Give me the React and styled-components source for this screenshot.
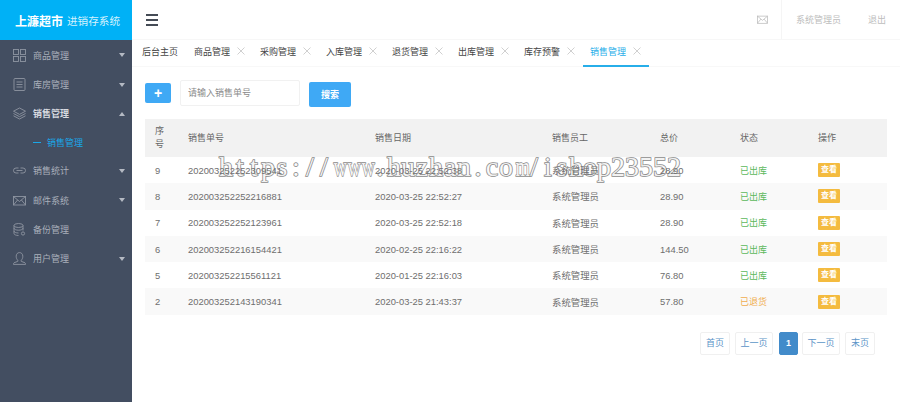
import React from 'react';
import styled, { createGlobalStyle } from 'styled-components';

const GlobalStyle = createGlobalStyle`
  html, body { margin: 0; padding: 0; background: #fff; }
  body { font-family: "Liberation Sans", "Noto Sans CJK SC", sans-serif; font-size: 9px; color: #666; }
  * { box-sizing: border-box; }
`;

const Page = styled.div`
  position: relative;
  display: flex;
  width: 900px;
  height: 402px;
  overflow: hidden;
`;

const Sidebar = styled.aside`
  flex: 0 0 132px;
  background: #434e61;
  color: #aab0bb;
`;

const Logo = styled.div`
  display: flex;
  align-items: center;
  justify-content: center;
  gap: 4px;
  height: 40px;
  padding-left: 3px;
  background: #00b1f6;
  color: #fff;
`;

const LogoName = styled.strong`
  font-size: 12px;
  font-weight: 700;
`;

const LogoSub = styled.span`
  font-size: 10.6px;
  color: #d5f1fd;
`;

const Menu = styled.nav`
  display: flex;
  flex-direction: column;
  padding-top: 0.5px;
`;

const MenuItem = styled.div`
  display: flex;
  align-items: center;
  height: 29.4px;
  padding: 0 7px 0 13px;
  color: ${p => (p.$open ? '#d8dbe0' : '#aab0bb')};
  font-weight: ${p => (p.$open ? 700 : 400)};
`;

const MenuLabel = styled.span`
  flex: 1;
  margin-left: 7px;
`;

const Caret = styled.i`
  width: 0;
  height: 0;
  border-left: 3.5px solid transparent;
  border-right: 3.5px solid transparent;
  ${p => (p.$up ? 'border-bottom' : 'border-top')}: 4px solid #b5bac3;
`;

const SubItem = styled.div`
  display: flex;
  align-items: center;
  height: 27.4px;
  padding-left: 33px;
  color: #1aa7e8;
`;

const SubDash = styled.i`
  width: 8px;
  height: 1px;
  margin-right: 6px;
  background: #1aa7e8;
`;

const Main = styled.main`
  flex: 1;
  min-width: 0;
`;

const TopBar = styled.header`
  display: flex;
  align-items: center;
  height: 40px;
  padding-left: 14px;
  border-bottom: 1px solid #f7f7f7;
`;

const Burger = styled.button`
  display: flex;
  flex-direction: column;
  gap: 3px;
  width: 12px;
  padding: 0;
  border: 0;
  background: none;
`;

const BurgerLine = styled.i`
  height: 2px;
  background: #454c56;
`;

const TopRight = styled.div`
  display: flex;
  align-items: center;
  height: 100%;
  margin-left: auto;
  color: #bdbdbd;
`;

const MailLink = styled.a`
  display: flex;
  align-items: center;
  height: 100%;
  padding: 0 13px 0 10px;
  border-right: 1px solid #f5f5f5;
`;

const UserName = styled.span`
  margin: 0 27px 0 14px;
`;

const Logout = styled.span`
  margin-right: 14px;
`;

const Tabs = styled.div`
  display: flex;
  height: 27px;
  padding-left: 3px;
  border-bottom: 1px solid #f8f8f8;
`;

const Tab = styled.div`
  display: flex;
  align-items: center;
  flex: 0 0 ${p => (p.$home ? '52px' : '66px')};
  height: 27px;
  padding: 0 0 3px 7px;
  color: ${p => (p.$active ? '#27aee9' : '#444')};
  border-bottom: 2px solid ${p => (p.$active ? '#27aee9' : 'transparent')};
`;

const TabClose = styled.svg`
  margin-left: 7px;
  flex: none;
`;

const Content = styled.section`
  padding: 13px 13px 0 13px;
`;

const Toolbar = styled.div`
  display: flex;
  align-items: center;
  height: 26px;
`;

const AddButton = styled.button`
  width: 26px;
  height: 20px;
  padding: 0;
  border: 0;
  border-radius: 2px;
  background: #3fa9f5;
  color: #fff;
  font: 700 14px/20px "Liberation Sans", sans-serif;
`;

const SearchInput = styled.input`
  width: 120px;
  height: 26px;
  margin-left: 9px;
  padding: 0 7px;
  border: 1px solid #f1f1f1;
  border-radius: 2px;
  font: 9px "Liberation Sans", "Noto Sans CJK SC", sans-serif;
  outline: none;
  &::placeholder { color: #8a8a8a; }
`;

const SearchButton = styled.button`
  width: 42px;
  height: 25px;
  margin: 3px 0 0 9px;
  padding: 0;
  border: 0;
  border-radius: 2px;
  background: #3fa9f5;
  color: #fff;
  font: 700 9px "Liberation Sans", "Noto Sans CJK SC", sans-serif;
`;

const Table = styled.table`
  width: 742px;
  margin-top: 13px;
  border-collapse: collapse;
  table-layout: fixed;
`;

const HeadCell = styled.th`
  width: ${p => p.$w}px;
  height: 38px;
  padding: 0 10px;
  background: #f2f2f2;
  color: #666;
  font-weight: 400;
  line-height: 13px;
  text-align: left;
`;

const Row = styled.tr`
  height: 26.3px;
  background: ${p => (p.$even ? '#f9f9f9' : '#fff')};
`;

/* cell text sits above the stamp, row backgrounds below it */
const Cell = styled.td`
  position: relative;
  z-index: 2;
  padding: 0 10px;
  color: #6e6e6e;
  font-size: 9.4px;
`;

const Status = styled.span`
  color: ${p => (p.$returned ? '#f0ad4e' : '#5cb85c')};
  font-size: 9px;
`;

const ViewBadge = styled.span`
  display: inline-block;
  width: 22px;
  height: 14px;
  border-radius: 1px;
  background: #f4bb3f;
  color: #fff;
  font-size: 8px;
  font-weight: 700;
  line-height: 14px;
  text-align: center;
  vertical-align: middle;
`;

const Pager = styled.div`
  display: flex;
  justify-content: flex-end;
  width: 730px;
  margin-top: 17px;
`;

const PageButton = styled.a`
  width: ${p => p.$w}px;
  height: 23px;
  margin-left: ${p => p.$gap}px;
  border: 1px solid ${p => (p.$active ? '#428bca' : '#f0f0f0')};
  border-radius: 2px;
  background: ${p => (p.$active ? '#428bca' : '#fff')};
  color: ${p => (p.$active ? '#fff' : '#5b93c7')};
  font-weight: ${p => (p.$active ? 700 : 400)};
  line-height: 21px;
  text-align: center;
`;

// the site stamp lying over the table, every character in a 14px cell
const Stamp = styled.div`
  position: absolute;
  z-index: 1;
  left: 219px;
  top: 150px;
  display: flex;
  color: rgba(255, 255, 255, 0.9);
  -webkit-text-stroke: 1.5px #8a8a8a;
  paint-order: stroke fill;
  font: 400 28px/34px "Liberation Serif", serif;
  white-space: nowrap;
  pointer-events: none;
`;

const StampChar = styled.span`
  display: block;
  flex: 0 0 14px;
  width: 14px;
  text-align: center;
  ${p => p.$wide && 'transform: scaleX(0.66);'}
`;

const iconProps = { width: 13, height: 13, viewBox: '0 0 13 13', fill: 'none', stroke: '#8e95a2', strokeWidth: 0.9 };

const GridIcon = () => (
  <svg {...iconProps}>
    <rect x="0.5" y="0.5" width="5" height="5" />
    <rect x="7.5" y="0.5" width="5" height="5" />
    <rect x="0.5" y="7.5" width="5" height="5" />
    <rect x="7.5" y="7.5" width="5" height="5" />
  </svg>
);

const ListIcon = () => (
  <svg {...iconProps}>
    <rect x="1" y="0.5" width="11" height="12" rx="1" />
    <path d="M3.5 4h6M3.5 6.5h6M3.5 9h6" />
  </svg>
);

const LayersIcon = () => (
  <svg {...iconProps}>
    <path d="M6.5 1 L12.5 4.2 L6.5 7.4 L0.5 4.2 Z" />
    <path d="M0.5 6.5 L6.5 9.7 L12.5 6.5" />
    <path d="M0.5 8.8 L6.5 12 L12.5 8.8" />
  </svg>
);

const LinkIcon = () => (
  <svg {...iconProps}>
    <path d="M5.5 4H3a2.5 2.5 0 0 0 0 5h2.5M7.5 4H10a2.5 2.5 0 0 1 0 5H7.5M3.5 6.5h6" />
  </svg>
);

const MailIcon = ({ stroke = '#8e95a2', size = 13 }) => (
  <svg {...iconProps} width={size} height={size} stroke={stroke}>
    <rect x="0.5" y="2.5" width="12" height="8.5" />
    <path d="M0.5 2.5 L6.5 7.5 L12.5 2.5M0.5 11 L4.6 6M12.5 11 L8.4 6" />
  </svg>
);

const DatabaseIcon = () => (
  <svg {...iconProps}>
    <ellipse cx="5.5" cy="2.5" rx="4.5" ry="2" />
    <path d="M1 2.5v8c0 1.1 2 2 4.5 2M10 2.5v5M1 5.2c0 1.1 2 2 4.5 2s4.5-.9 4.5-2M1 8c0 1.1 2 2 4.5 2" />
    <circle cx="10" cy="10.5" r="1.6" />
  </svg>
);

const UserIcon = () => (
  <svg {...iconProps}>
    <path d="M4.8 8.2C3.6 7.2 3.2 5.8 3.2 4.2 3.2 2 4.6 0.6 6.5 0.6S9.8 2 9.8 4.2c0 1.6-.4 3-1.6 4v1.1l3.8 1.5c.5.2.6.6.6 1.6H.4c0-1 .1-1.4.6-1.6l3.8-1.5z" />
  </svg>
);

const CloseMark = () => (
  <TabClose width="8" height="8" viewBox="0 0 8 8" fill="none" stroke="#c4c4c4" strokeWidth="0.8">
    <path d="M0.5 0.5L7.5 7.5M7.5 0.5L0.5 7.5" />
  </TabClose>
);

const menuTop = [
  { label: '商品管理', icon: <GridIcon /> },
  { label: '库房管理', icon: <ListIcon /> },
];

const menuBottom = [
  { label: '销售统计', icon: <LinkIcon />, caret: true },
  { label: '邮件系统', icon: <MailIcon />, caret: true },
  { label: '备份管理', icon: <DatabaseIcon /> },
  { label: '用户管理', icon: <UserIcon />, caret: true },
];

const tabs = ['商品管理', '采购管理', '入库管理', '退货管理', '出库管理', '库存预警'];

const columns = [
  ['序号', 33],
  ['销售单号', 187],
  ['销售日期', 177],
  ['销售员工', 108],
  ['总价', 80],
  ['状态', 78],
  ['操作', 79],
];

const sales = [
  { id: 9, no: '202003252252309541', date: '2020-03-25 22:52:38', price: '28.90' },
  { id: 8, no: '202003252252216881', date: '2020-03-25 22:52:27', price: '28.90' },
  { id: 7, no: '202003252252123961', date: '2020-03-25 22:52:18', price: '28.90' },
  { id: 6, no: '202003252216154421', date: '2020-02-25 22:16:22', price: '144.50' },
  { id: 5, no: '202003252215561121', date: '2020-01-25 22:16:03', price: '76.80' },
  { id: 2, no: '202003252143190341', date: '2020-03-25 21:43:37', price: '57.80', returned: true },
];

const pages = [
  { label: '首页', w: 30, gap: 0 },
  { label: '上一页', w: 38, gap: 5 },
  { label: '1', w: 19, gap: 6, active: true },
  { label: '下一页', w: 38, gap: 4 },
  { label: '末页', w: 30, gap: 5 },
];

const stampText = 'https://www.huzhan.com/ishop23552';

export default function App() {
  return (
    <Page>
      <GlobalStyle />
      <Sidebar>
        <Logo>
          <LogoName>上濂超市</LogoName>
          <LogoSub>进销存系统</LogoSub>
        </Logo>
        <Menu>
          {menuTop.map(item => (
            <MenuItem key={item.label}>
              {item.icon}
              <MenuLabel>{item.label}</MenuLabel>
              <Caret />
            </MenuItem>
          ))}
          <MenuItem $open>
            <LayersIcon />
            <MenuLabel>销售管理</MenuLabel>
            <Caret $up />
          </MenuItem>
          <SubItem>
            <SubDash />
            销售管理
          </SubItem>
          {menuBottom.map(item => (
            <MenuItem key={item.label}>
              {item.icon}
              <MenuLabel>{item.label}</MenuLabel>
              {item.caret && <Caret />}
            </MenuItem>
          ))}
        </Menu>
      </Sidebar>
      <Main>
        <TopBar>
          <Burger aria-label="menu">
            <BurgerLine />
            <BurgerLine />
            <BurgerLine />
          </Burger>
          <TopRight>
            <MailLink>
              <MailIcon stroke="#bdbdbd" size={11} />
            </MailLink>
            <UserName>系统管理员</UserName>
            <Logout>退出</Logout>
          </TopRight>
        </TopBar>
        <Tabs>
          <Tab $home>后台主页</Tab>
          {tabs.map(name => (
            <Tab key={name}>
              {name}
              <CloseMark />
            </Tab>
          ))}
          <Tab $active>
            销售管理
            <CloseMark />
          </Tab>
        </Tabs>
        <Content>
          <Toolbar>
            <AddButton>+</AddButton>
            <SearchInput placeholder="请输入销售单号" />
            <SearchButton>搜索</SearchButton>
          </Toolbar>
          <Table>
            <thead>
              <tr>
                {columns.map(([title, w]) => (
                  <HeadCell key={title} $w={w}>{title}</HeadCell>
                ))}
              </tr>
            </thead>
            <tbody>
              {sales.map((sale, i) => (
                <Row key={sale.id} $even={i % 2 === 1}>
                  <Cell>{sale.id}</Cell>
                  <Cell>{sale.no}</Cell>
                  <Cell>{sale.date}</Cell>
                  <Cell>系统管理员</Cell>
                  <Cell>{sale.price}</Cell>
                  <Cell>
                    <Status $returned={sale.returned}>{sale.returned ? '已退货' : '已出库'}</Status>
                  </Cell>
                  <Cell>
                    <ViewBadge>查看</ViewBadge>
                  </Cell>
                </Row>
              ))}
            </tbody>
          </Table>
          <Pager>
            {pages.map(p => (
              <PageButton key={p.label} $w={p.w} $gap={p.gap} $active={p.active}>{p.label}</PageButton>
            ))}
          </Pager>
        </Content>
      </Main>
      <Stamp>
        {[...stampText].map((ch, i) => (
          <StampChar key={i} $wide={ch === 'w' || ch === 'm'}>{ch}</StampChar>
        ))}
      </Stamp>
    </Page>
  );
}
